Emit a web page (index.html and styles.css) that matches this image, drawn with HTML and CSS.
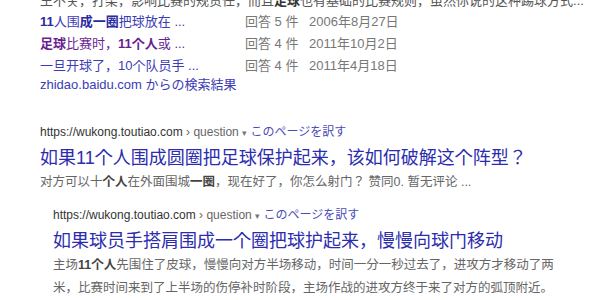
FILE: index.html
```html
<!DOCTYPE html>
<html lang="ja">
<head>
    <meta charset="UTF-8">
    <title>検索結果</title>
    <link rel="stylesheet" href="styles.css">
</head>
<body>
  <div class="page">
    <div class="cut-line">王不关，打架，影响比赛的规责任，而且<b>足球</b>也有基础的比赛规则，虽然你说的这种踢球方式...</div>

    <div class="qa-list">
      <div class="qa-row">
        <a class="qa-link"><b>11</b>人围<b>成一圈</b>把球放在 ...</a>
        <span class="qa-count">回答 5 件</span>
        <span class="qa-date">2006年8月27日</span>
      </div>
      <div class="qa-row">
        <a class="qa-link visited"><b>足球</b>比赛时，<b>11个人</b>或 ...</a>
        <span class="qa-count">回答 4 件</span>
        <span class="qa-date">2011年10月2日</span>
      </div>
      <div class="qa-row">
        <a class="qa-link">一旦开球了，10个队员手 ...</a>
        <span class="qa-count">回答 4 件</span>
        <span class="qa-date">2011年4月18日</span>
      </div>
      <a class="source">zhidao.baidu.com からの検索結果</a>
    </div>

    <div class="result">
      <div class="cite">https://wukong.toutiao.com <span class="crumb">› question</span> <span class="arrow">▾</span> <a class="translate">このページを訳す</a></div>
      <a class="title">如果11个人围成圆圈把足球保护起来，该如何破解这个阵型？</a>
      <div class="snippet">对方可以十<b>个人</b>在外面围城<b>一圈</b>，现在好了，你怎么射门？ 赞同0. 暂无评论 ...</div>
    </div>

    <div class="result nested">
      <div class="cite">https://wukong.toutiao.com <span class="crumb">› question</span> <span class="arrow">▾</span> <a class="translate">このページを訳す</a></div>
      <a class="title">如果球员手搭肩围成一个圈把球护起来，慢慢向球门移动</a>
      <div class="snippet">主场<b>11个人</b>先围住了皮球，慢慢向对方半场移动，时间一分一秒过去了，进攻方才移动了两米，比赛时间来到了上半场的伤停补时阶段，主场作战的进攻方终于来了对方的弧顶附近。</div>
    </div>
  </div>
</body>
</html>
```

FILE: styles.css
```css
* {
  box-sizing: border-box;
}
body {
  margin: 0;
  background: #fff;
  font-family: "Liberation Sans", "Noto Sans CJK JP", "Noto Sans CJK SC", sans-serif;
  color: #4d5156;
  overflow: hidden;
}
a {
  text-decoration: none;
}
.page {
  width: 560px;
  padding-left: 40px;
}
.cut-line {
  margin-top: -9px;
  font-size: 13px;
  line-height: 20px;
  color: #555;
  white-space: nowrap;
}
.cut-line b {
  color: #333;
}
.qa-row {
  display: grid;
  grid-template-columns: 205px 64px auto;
  font-size: 13px;
  line-height: 22px;
}
.qa-link {
  color: #3c3cb4;
}
.qa-link b {
  color: #2a2aa0;
}
.qa-link.visited,
.qa-link.visited b {
  color: #6a1f90;
}
.qa-count,
.qa-date {
  color: #777;
}
.source {
  display: block;
  margin-top: -2px;
  color: #3c3cb4;
  font-size: 13px;
  line-height: 20px;
}
.result {
  margin-top: 28px;
}
.result.nested {
  margin-top: 12px;
  margin-left: 13px;
}
.cite {
  font-size: 12px;
  line-height: 18px;
  color: #333;
}
.crumb {
  color: #666;
}
.arrow {
  color: #777;
  font-size: 9px;
}
.translate {
  color: #4a4ab8;
}
.title {
  display: block;
  font-size: 18px;
  line-height: 26px;
  color: #2c2cae;
  margin-top: 3px;
}
.snippet {
  font-size: 12.5px;
  line-height: 23px;
  color: #666;
}
.snippet b {
  color: #444;
}
```
